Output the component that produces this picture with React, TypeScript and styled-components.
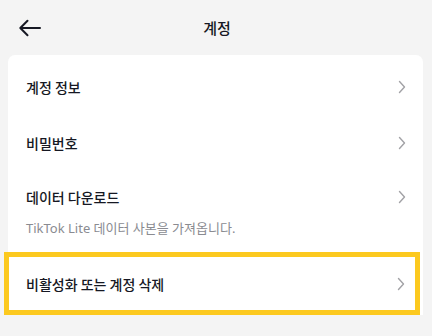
import React from "react";
import styled, { createGlobalStyle } from "styled-components";

const Global = createGlobalStyle`
  html, body { margin: 0; padding: 0; background: #f4f4f4; }
  body { font-family: "Noto Sans", "Noto Sans CJK KR", sans-serif; color: #161823; }
`;

const Page = styled.div`
  width: 432px;
  height: 336px;
  background: #f4f4f4;
  display: flex;
  flex-direction: column;
  overflow: hidden;
`;

const Header = styled.header`
  height: 55px;
  display: grid;
  grid-template-columns: 48px 1fr 48px;
  align-items: center;
`;

const BackButton = styled.button`
  border: 0;
  background: none;
  padding: 0 0 0 18px;
  height: 55px;
  display: flex;
  align-items: center;
  cursor: pointer;
`;

const Title = styled.h1`
  margin: 0;
  text-align: center;
  font-size: 15px;
  font-weight: 500;
  font-family: "Noto Sans CJK KR", sans-serif;
  transform: translateX(1px);
`;

const Card = styled.div`
  margin: 0 9px 0 8px;
  background: #fff;
  border-radius: 7px 7px 0 0;
  padding-top: 4px;
  display: flex;
  flex-direction: column;
`;

const Row = styled.div<{ $highlight?: boolean }>`
  display: flex;
  align-items: center;
  justify-content: space-between;
  min-height: 56px;
  padding: ${(p) => (p.$highlight ? "0 10px 0 17px" : "0 17px 0 18px")};
  box-sizing: border-box;
  ${(p) =>
    p.$highlight &&
    `
    border: 5px solid #fcc91f;
    height: 63px;
    margin: 0 3px 0 -4px;
  `}
`;

const TallRow = styled(Row)`
  align-items: flex-start;
  padding-top: 16px;
  padding-bottom: 15px;
`;

const TextCol = styled.div`
  display: flex;
  flex-direction: column;
  gap: 12px;
`;

const Label = styled.span`
  font-family: "Noto Sans CJK KR", sans-serif;
  font-size: 14px;
  font-weight: 500;
  line-height: 20px;
  color: #161823;
`;

const Sub = styled.span`
  font-family: "Noto Sans", "Noto Sans CJK KR", sans-serif;
  font-size: 13px;
  line-height: 18px;
  color: #8a8b91;
`;

const ChevronWrap = styled.span<{ $top?: boolean }>`
  display: flex;
  align-items: center;
  ${(p) => (p.$top ? "margin-top: 3px;" : "")}
`;

const Chevron = ({ top }: { top?: boolean }) => (
  <ChevronWrap $top={top}>
    <svg width="8" height="14" viewBox="0 0 8 14" fill="none">
      <path d="M1.5 1.5 L6.5 7 L1.5 12.5" stroke="#a2a2a6" strokeWidth="1.4" strokeLinecap="round" strokeLinejoin="round" />
    </svg>
  </ChevronWrap>
);

export default function App() {
  return (
    <Page>
      <Global />
      <Header>
        <BackButton aria-label="back">
          <svg width="24" height="18" viewBox="0 0 24 18" fill="none">
            <path d="M22 9 H2.5 M9.5 1.8 L2.3 9 L9.5 16.2" stroke="#161823" strokeWidth="2" strokeLinecap="round" strokeLinejoin="round" />
          </svg>
        </BackButton>
        <Title>계정</Title>
        <span />
      </Header>
      <Card>
        <Row>
          <Label>계정 정보</Label>
          <Chevron />
        </Row>
        <Row>
          <Label>비밀번호</Label>
          <Chevron />
        </Row>
        <TallRow>
          <TextCol>
            <Label>데이터 다운로드</Label>
            <Sub>TikTok Lite 데이터 사본을 가져옵니다.</Sub>
          </TextCol>
          <Chevron top />
        </TallRow>
        <Row $highlight>
          <Label>비활성화 또는 계정 삭제</Label>
          <Chevron />
        </Row>
      </Card>
    </Page>
  );
}
